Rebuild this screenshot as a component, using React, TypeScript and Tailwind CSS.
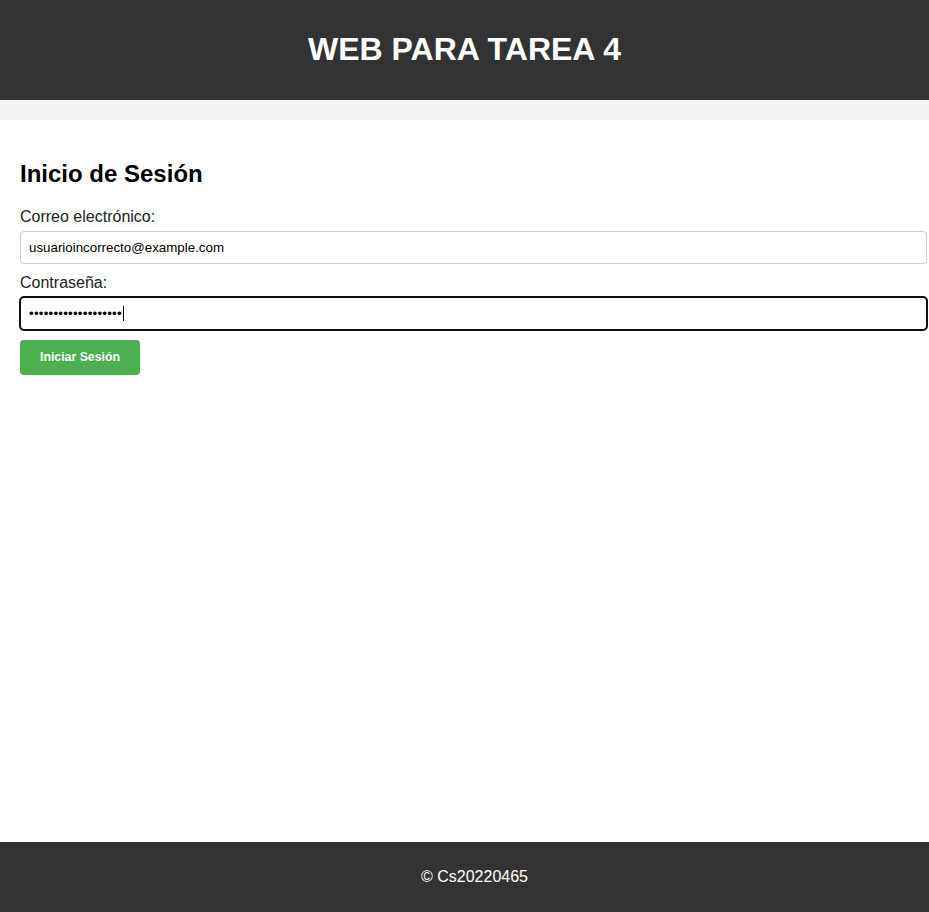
import React from "react";

export default function App() {
  return (
    <div className="flex h-screen flex-col bg-[#f4f4f4] font-['Liberation_Sans',Arial,sans-serif] text-[#000]">
      <header className="h-[100px] shrink-0 bg-[#333333] pt-[31px] text-center text-white">
        <h1 className="text-[32px] font-bold leading-[37px]">WEB PARA TAREA 4</h1>
      </header>
      <div className="h-[20px] shrink-0" />
      <main className="flex-1 overflow-hidden bg-white p-[20px]">
        <h2 className="mb-[20px] mt-[20px] text-[24px] font-bold leading-[28px]">Inicio de Sesión</h2>
        <label className="mb-[5px] block text-[16px] leading-[18px] text-[#222]">Correo electrónico:</label>
        <input
          readOnly
          value="usuarioincorrecto@example.com"
          className="mb-[10px] box-content block h-[15px] w-full rounded-[4px] border border-[#cccccc] px-[8px] py-[8px] text-[13.33px] leading-[15px] text-black outline-none"
        />
        <label className="mb-[5px] block text-[16px] leading-[18px] text-[#222]">Contraseña:</label>
        <div className="mb-[10px] box-content flex h-[15px] w-full items-center rounded-[4px] border border-[#cccccc] px-[8px] py-[8px] text-[13.33px] leading-[15px] text-black outline-2 -outline-offset-1 outline-[#101010] [outline-style:solid]">
          <span className="tracking-[0.22px]">•••••••••••••••••••</span>
          <span className="ml-[1px] inline-block h-[15px] w-[1px] bg-black" />
        </div>
        <button className="h-[35px] w-[120px] rounded-[4px] bg-[#4caf50] text-[12.3px] font-bold text-white">
          Iniciar Sesión
        </button>
      </main>
      <footer className="flex h-[70px] shrink-0 items-center justify-center bg-[#333333] pl-[20px] text-[16px] text-white">
        © Cs20220465
      </footer>
    </div>
  );
}
